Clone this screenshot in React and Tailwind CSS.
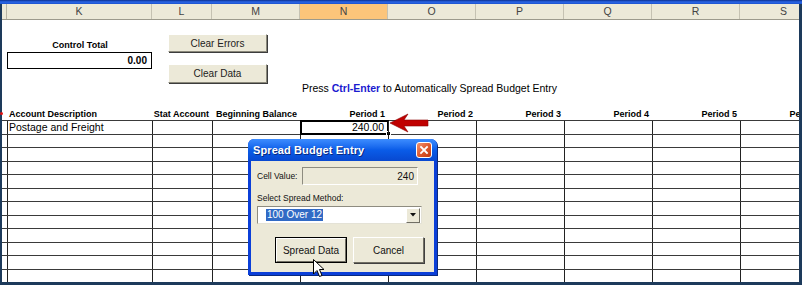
import React from "react";

const COLS = [
  { key: "K", w: "w-[145px]", label: "Account Description", left: true },
  { key: "L", w: "w-[60px]", label: "Stat Account" },
  { key: "M", w: "w-[88px]", label: "Beginning Balance" },
  { key: "N", w: "w-[88px]", label: "Period 1" },
  { key: "O", w: "w-[88px]", label: "Period 2" },
  { key: "P", w: "w-[88px]", label: "Period 3" },
  { key: "Q", w: "w-[88px]", label: "Period 4" },
  { key: "R", w: "w-[88px]", label: "Period 5" },
  { key: "S", w: "w-[88px]", label: "Period 6" },
];

const ROW_H = [
  "h-[14px]", "h-[13px]", "h-[14px]", "h-[13px]", "h-[14px]", "h-[13px]",
  "h-[14px]", "h-[13px]", "h-[14px]", "h-[13px]", "h-[14px]", "h-[13px]",
];

function SheetButton({ children, className }) {
  return (
    <div
      className={`flex items-center justify-center bg-[#ece9d8] border border-t-white border-l-white border-b-[#8a887a] border-r-[#8a887a] shadow-[1px_1px_0_#3c3c3c] text-[10px] text-[#222] ${className}`}
    >
      {children}
    </div>
  );
}

function GridRow({ h, first }) {
  return (
    <div className={`flex shrink-0 border-t border-[#3a3a3a] ${h}`}>
      <div className="w-[5px] shrink-0" />
      {COLS.map((c, i) => (
        <div key={c.key} className={`relative shrink-0 border-l border-[#222] ${c.w}`}>
          {first && i === 0 && (
            <span className="block pl-[1px] text-[10.5px] leading-[12px] text-black">Postage and Freight</span>
          )}
          {first && i === 3 && (
            <>
              <div className="absolute -left-px -top-px w-[89px] h-[15px] border-2 border-black" />
              <span className="block pr-[4px] text-right text-[10.5px] leading-[12px] text-black">240.00</span>
              <div className="absolute left-[85px] top-[10px] w-[5px] h-[5px] bg-black border border-white" />
            </>
          )}
        </div>
      ))}
    </div>
  );
}

function Dialog() {
  return (
    <div className="absolute left-[248px] top-[139px] w-[189px] h-[136px] flex flex-col rounded-t-[6px] bg-[#0b3fd8] shadow-[1px_1px_0_#0a2a80]">
      <div className="flex items-center h-[22px] shrink-0 rounded-t-[6px] px-[5px] bg-gradient-to-b from-[#3d8dff] via-[#0a5ce8] to-[#0848d0]">
        <span className="flex-1 text-white font-bold text-[11px] tracking-[0.1px] [text-shadow:1px_1px_0_#0a2a80]">
          Spread Budget Entry
        </span>
        <div className="flex items-center justify-center w-[16px] h-[16px] rounded-[3px] border border-white bg-gradient-to-br from-[#f0926f] via-[#e05a2e] to-[#c0390c]">
          <svg width="10" height="10" viewBox="0 0 10 10">
            <path d="M2 2 L8 8 M8 2 L2 8" stroke="white" strokeWidth="1.8" strokeLinecap="square" />
          </svg>
        </div>
      </div>
      <div className="flex-1 mx-[3px] mb-[3px] bg-[#ece9d8] flex flex-col pl-[6px] text-[8.5px] text-[#111]">
        <div className="flex items-center mt-[6px] h-[18px]">
          <span className="w-[45px]">Cell Value:</span>
          <div className="w-[116px] h-[18px] flex items-center justify-end pr-[3px] border border-t-[#8e8c80] border-l-[#8e8c80] border-b-white border-r-white bg-[#ece9d8] text-[10px]">
            240
          </div>
        </div>
        <span className="mt-[7px] leading-[12px]">Select Spread Method:</span>
        <div className="mt-[2px] w-[165px] h-[18px] flex items-center bg-white border border-t-[#8e8c80] border-l-[#8e8c80] border-b-[#e4e2d6] border-r-[#e4e2d6]">
          <span className="ml-[8px] px-[1px] bg-[#316ac5] text-white text-[10px] leading-[12px]">100 Over 12</span>
          <div className="ml-auto mr-px w-[14px] h-[15px] flex items-center justify-center bg-[#ece9d8] border border-t-white border-l-white border-b-[#716f64] border-r-[#716f64]">
            <svg width="6" height="4" viewBox="0 0 6 4">
              <path d="M0 0 H6 L3 3.5 Z" fill="#111" />
            </svg>
          </div>
        </div>
        <div className="flex mt-[13px] ml-[18px] gap-[6px]">
          <div className="w-[72px] h-[26px] border border-black">
            <div className="w-full h-full flex items-center justify-center bg-[#ece9d8] border border-t-white border-l-white border-b-[#716f64] border-r-[#716f64] text-[10px]">
              Spread Data
            </div>
          </div>
          <div className="w-[71px] h-[26px] flex items-center justify-center bg-[#ece9d8] border border-t-white border-l-white border-b-[#716f64] border-r-[#716f64] shadow-[1px_1px_0_#404040] text-[10px]">
            Cancel
          </div>
        </div>
      </div>
    </div>
  );
}

export default function App() {
  return (
    <div className="relative w-[802px] h-[285px] overflow-hidden bg-[#1d3a5b] font-['Liberation_Sans',Arial,sans-serif]">
      <div className="h-[4px] bg-gradient-to-b from-[#0b2f8f] via-[#2a66e8] to-[#1c52cc]" />
      <div className="flex h-[278px]">
        <div className="w-[2px] shrink-0" />
        <div className="w-[797px] shrink-0 overflow-hidden bg-white flex flex-col">
          {/* column letters */}
          <div className="flex shrink-0 h-[16px] bg-[#ece9d8] border-b border-[#9c9a8c]">
            <div className="w-[5px] shrink-0 border-r border-[#b8b5a5]" />
            {COLS.map((c) => (
              <div
                key={c.key}
                className={`shrink-0 ${c.w} border-r border-[#c5c2b2] text-center text-[10.5px] leading-[15px] text-[#444] ${
                  c.key === "N" ? "bg-[#fcc57a]" : ""
                }`}
              >
                {c.key}
              </div>
            ))}
          </div>

          {/* controls above the table */}
          <div className="flex shrink-0 h-[87px]">
            <div className="w-[5px] shrink-0" />
            <div className="w-[145px] shrink-0 flex flex-col pt-[20px]">
              <span className="text-center font-bold text-[9px] leading-[11px] text-black pl-[1px]">Control Total</span>
              <div className="mt-[1px] h-[17px] border border-black flex items-center justify-end pr-[4px] font-bold text-[10px] text-black">
                0.00
              </div>
            </div>
            <div className="ml-[16px] w-[99px] shrink-0 flex flex-col pt-[14px] gap-[12px]">
              <SheetButton className="h-[18px]">Clear Errors</SheetButton>
              <SheetButton className="h-[19px]">Clear Data</SheetButton>
            </div>
            <div className="ml-[35px] pt-[62px] text-[10.5px] leading-[13px] text-black whitespace-nowrap">
              Press <span className="font-bold text-[#1a1ad0]">Ctrl-Enter</span> to Automatically Spread Budget Entry
            </div>
          </div>

          {/* column captions */}
          <div className="flex shrink-0 h-[13px] items-end">
            <div className="w-[5px] shrink-0" />
            {COLS.map((c) => (
              <div
                key={c.key}
                className={`shrink-0 ${c.w} font-bold text-[9px] leading-[11px] text-black whitespace-nowrap ${
                  c.left ? "pl-[2px]" : "text-right pr-[3px]"
                }`}
              >
                {c.label}
              </div>
            ))}
          </div>

          {ROW_H.map((h, i) => (
            <GridRow key={i} h={h} first={i === 0} />
          ))}
        </div>
      </div>

      <span className="absolute left-0 top-[112px] w-[3px] h-[3px] rounded-full bg-[#e01010]" />

      <svg className="absolute left-[389px] top-[113px]" width="40" height="20" viewBox="0 0 40 20">
        <polygon points="1,10 19,1 15,7 39,7 39,13 15,13 19,19" fill="#c00000" stroke="#8a0000" strokeWidth="0.6" />
      </svg>

      <Dialog />

      <svg className="absolute left-[313px] top-[259px]" width="13" height="19" viewBox="0 0 13 19">
        <path d="M0.5 0.5 L0.5 15 L4 11.5 L6.5 17.5 L9 16.5 L6.5 10.5 L11 10.5 Z" fill="white" stroke="black" strokeWidth="1" strokeLinejoin="miter" />
      </svg>
    </div>
  );
}
